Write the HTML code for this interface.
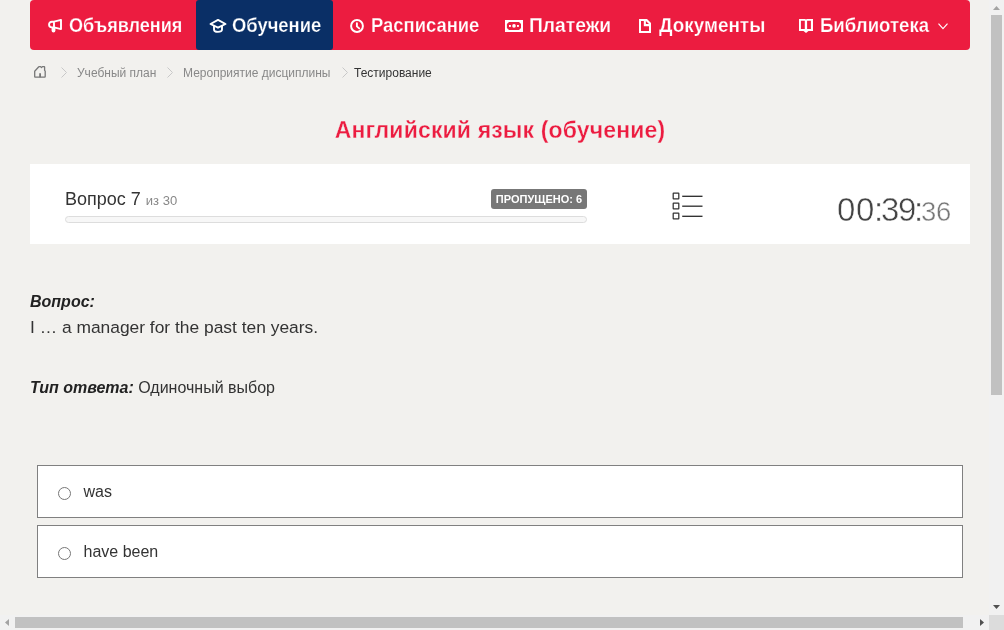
<!DOCTYPE html>
<html>
<head>
<meta charset="utf-8">
<style>
html,body{margin:0;padding:0;}
body{width:1004px;height:630px;overflow:hidden;position:relative;background:#f2f1ee;font-family:"Liberation Sans",sans-serif;color:#333;}
.a{position:absolute;white-space:nowrap;}
#nav{position:absolute;left:30px;top:0;width:940px;height:50px;background:#ec1c40;border-radius:4px;}
#act{position:absolute;left:196px;top:0;width:137px;height:49.6px;background:#0a2f66;border-radius:3px;}
.nt{position:absolute;top:13px;font-size:20.5px;transform-origin:0 0;font-weight:bold;color:#fff;white-space:nowrap;-webkit-text-stroke:0.25px #ec1c40;}
svg{position:absolute;overflow:visible;}
.bc{position:absolute;top:66px;font-size:12px;line-height:15px;color:#888;white-space:nowrap;}
#title{position:absolute;left:30px;width:940px;top:115px;letter-spacing:0.15px;text-align:center;font-size:23px;font-weight:bold;color:#ec1c40;line-height:30px;-webkit-text-stroke:0.3px #f2f1ee;}
#panel{position:absolute;left:30px;top:164px;width:940px;height:80px;background:#fff;}
#prog{position:absolute;left:65px;top:216px;width:520px;height:5px;border:1px solid #ddd;border-radius:4px;background:#f7f7f7;}
#badge{position:absolute;left:491px;top:189px;width:96px;height:20px;background:#777;border-radius:3px;color:#fff;font-size:11px;font-weight:bold;line-height:20px;text-align:center;}
.opt{position:absolute;left:37px;width:924px;height:51px;border:1px solid #808080;background:#fff;}
.radio{position:absolute;left:20px;top:21px;width:11px;height:11px;border:1px solid #767676;border-radius:50%;background:#fff;}
.ot{position:absolute;left:45.5px;top:0;line-height:51px;font-size:16px;color:#333;}
#vs{position:absolute;left:989px;top:0;width:15px;height:615px;background:#f1f1f1;}
#hs{position:absolute;left:0;top:615px;width:989px;height:15px;background:#f1f1f1;}
#corner{position:absolute;left:989px;top:615px;width:15px;height:15px;background:#dcdcdc;}
.tg{position:absolute;top:190px;font-size:33px;line-height:40px;color:#444;-webkit-text-stroke:0.5px #fff;}
.ts{position:absolute;top:195px;font-size:27.5px;line-height:34px;color:#777;-webkit-text-stroke:0.45px #fff;}
</style>
</head>
<body>
<div id="root" style="position:absolute;left:0;top:0;width:1004px;height:630px;will-change:transform">
<div id="nav"></div>
<div id="act"></div>
<!-- megaphone -->
<svg style="left:48px;top:19px" width="14" height="14" viewBox="0 0 14 14">
 <path d="M6 2.7 L3.9 2.7 A2.85 2.85 0 0 0 3.9 8.4 L6 8.4 Z M6 2.7 L13 0.9 L13 10.1 L6 8.4" fill="none" stroke="#fff" stroke-width="1.9" stroke-linejoin="round"/>
 <path d="M3.6 8 L3.6 11.6 A1.9 1.9 0 0 0 7.4 11.6 L7.4 8 Z" fill="#fff"/>
</svg>
<div class="nt" style="left:69px;transform:scaleX(0.881)">Объявления</div>
<!-- cap -->
<svg style="left:209px;top:19px" width="18" height="14" viewBox="0 0 18 14">
 <path d="M1.5 5 L9 0.95 L16.5 5 L9 8.7 Z" fill="none" stroke="#fff" stroke-width="1.9" stroke-linejoin="round"/>
 <path d="M5 6.5 L5 10.5 Q5 12.9 9 12.9 Q13 12.9 13 10.5 L13 6.5" fill="none" stroke="#fff" stroke-width="1.9"/>
</svg>
<div class="nt" style="left:232px;transform:scaleX(0.897);-webkit-text-stroke-color:#0a2f66">Обучение</div>
<!-- clock -->
<svg style="left:350px;top:19px" width="14" height="14" viewBox="0 0 14 14">
 <circle cx="7" cy="7" r="5.9" fill="none" stroke="#fff" stroke-width="2"/>
 <path d="M6.9 4.3 L6.9 7.4 L9.2 9.4" fill="none" stroke="#fff" stroke-width="1.9" stroke-linecap="round"/>
</svg>
<div class="nt" style="left:371px;transform:scaleX(0.898)">Расписание</div>
<!-- money -->
<svg style="left:505px;top:20px" width="18" height="12" viewBox="0 0 18 12">
 <rect x="0" y="0" width="18" height="12" fill="#fff"/>
 <path d="M1.9 4 L4 2 L14 2 L16 4 L16 8 L14 9.9 L4 9.9 L1.9 8 Z" fill="#ec1c40"/>
 <circle cx="9" cy="5.9" r="1.8" fill="#fff"/>
 <rect x="4" y="5" width="1.9" height="1.9" fill="#fff"/>
 <rect x="12" y="5" width="1.9" height="1.9" fill="#fff"/>
</svg>
<div class="nt" style="left:529px;transform:scaleX(0.94)">Платежи</div>
<!-- doc -->
<svg style="left:639px;top:19px" width="12" height="14" viewBox="0 0 12 14">
 <path fill="#fff" fill-rule="evenodd" d="M0 0 L8 0 L12 4 L12 14 L0 14 Z M2 2 L4.8 2 L4.8 7.2 L10 7.2 L10 12 L2 12 Z M6.9 2 L10 5.1 L6.9 5.1 Z"/>
</svg>
<div class="nt" style="left:659px;transform:scaleX(0.922)">Документы</div>
<!-- book -->
<svg style="left:799px;top:19px" width="14" height="14" viewBox="0 0 14 14">
 <path fill="#fff" fill-rule="evenodd" d="M0 0 L6 0 L7 0.6 L8 0 L14 0 L14 12 L9.5 12 L7 14 L4.5 12 L0 12 Z M1.9 1.8 L5.8 1.8 L5.8 10 L1.9 10 Z M8.1 1.8 L11.9 1.8 L11.9 10 L8.1 10 Z"/>
</svg>
<div class="nt" style="left:820px;transform:scaleX(0.907)">Библиотека</div>
<svg style="left:938px;top:23px" width="10" height="7" viewBox="0 0 10 7">
 <path d="M0.5 0.6 L5 5.6 L9.5 0.6" fill="none" stroke="#fff" stroke-width="1.15"/>
</svg>

<!-- breadcrumbs -->
<svg style="left:34px;top:66px" width="12" height="12" viewBox="0 0 12 12">
 <path d="M0.7 5.2 L4.8 0.8 Q5 0.6 5.4 0.6 L6.6 0.6 L7.5 1.6 L8.4 0.6 L10.2 0.6 Q10.6 0.6 10.6 1 L10.6 4.4 L11.2 5.1 L11.2 10.6 Q11.2 11.2 10.6 11.2 L1.3 11.2 Q0.7 11.2 0.7 10.6 Z" fill="none" stroke="#777" stroke-width="1.3" stroke-linejoin="round"/>
 <line x1="6.1" y1="7.2" x2="6.1" y2="11.2" stroke="#777" stroke-width="1.8"/>
</svg>
<svg style="left:61px;top:67px" width="6" height="11" viewBox="0 0 6 11"><path d="M0.5 0.5 L5.5 5.5 L0.5 10.5" fill="none" stroke="#c8c8c8" stroke-width="1"/></svg>
<div class="bc" style="left:77px">Учебный план</div>
<svg style="left:167px;top:67px" width="6" height="11" viewBox="0 0 6 11"><path d="M0.5 0.5 L5.5 5.5 L0.5 10.5" fill="none" stroke="#c8c8c8" stroke-width="1"/></svg>
<div class="bc" style="left:183px">Мероприятие дисциплины</div>
<svg style="left:342px;top:67px" width="6" height="11" viewBox="0 0 6 11"><path d="M0.5 0.5 L5.5 5.5 L0.5 10.5" fill="none" stroke="#c8c8c8" stroke-width="1"/></svg>
<div class="bc" style="left:354px;color:#333">Тестирование</div>

<div id="title">Английский язык (обучение)</div>

<div id="panel"></div>
<div class="a" style="left:65px;top:187px;font-size:18px;line-height:24px;color:#333">Вопрос 7 <span style="font-size:13px;color:#888">из 30</span></div>
<div id="prog"></div>
<div id="badge">ПРОПУЩЕНО: 6</div>
<svg style="left:672px;top:192px" width="32" height="29" viewBox="0 0 32 29">
 <rect x="1.2" y="1.2" width="5.6" height="5.6" fill="none" stroke="#333" stroke-width="1.25" rx="0.4"/>
 <rect x="1.2" y="11.2" width="5.6" height="5.6" fill="none" stroke="#333" stroke-width="1.25" rx="0.4"/>
 <rect x="1.2" y="21.2" width="5.6" height="5.6" fill="none" stroke="#333" stroke-width="1.25" rx="0.4"/>
 <line x1="10.2" y1="4.3" x2="30.5" y2="4.3" stroke="#333" stroke-width="1.35"/>
 <line x1="10.2" y1="14.2" x2="30.5" y2="14.2" stroke="#333" stroke-width="1.35"/>
 <line x1="10.2" y1="24.3" x2="30.5" y2="24.3" stroke="#333" stroke-width="1.35"/>
</svg>
<div id="timer">
<div class="tg" style="left:837px">0</div><div class="tg" style="left:856px">0</div><div class="tg" style="left:874px">:</div><div class="tg" style="left:881px">3</div><div class="tg" style="left:898px">9</div><div class="tg" style="left:914px">:</div>
<div class="ts" style="left:921px">3</div><div class="ts" style="left:936px">6</div>
</div>

<div class="a" style="left:30px;top:292px;font-size:16px;line-height:20px;font-weight:bold;font-style:italic;color:#222">Вопрос:</div>
<div class="a" style="left:30px;top:316px;font-size:17.4px;line-height:22px;color:#333">I … a manager for the past ten years.</div>
<div class="a" style="left:30px;top:378px;font-size:16px;line-height:20px;color:#333"><b style="color:#222"><i>Тип ответа:</i></b> Одиночный выбор</div>

<div class="opt" style="top:465px"><div class="radio"></div><div class="ot">was</div></div>
<div class="opt" style="top:525px"><div class="radio"></div><div class="ot">have been</div></div>

<div id="vs">
 <svg style="left:4px;top:6px" width="7" height="4" viewBox="0 0 7 4"><path d="M0 4 L3.5 0 L7 4 Z" fill="#a3a3a3"/></svg>
 <div style="position:absolute;left:2px;top:15px;width:11px;height:380px;background:#c1c1c1"></div>
 <svg style="left:4px;top:605px" width="7" height="4" viewBox="0 0 7 4"><path d="M0 0 L3.5 4 L7 0 Z" fill="#505050"/></svg>
</div>
<div id="hs">
 <svg style="left:5px;top:4px" width="4" height="7" viewBox="0 0 4 7"><path d="M4 0 L0 3.5 L4 7 Z" fill="#a3a3a3"/></svg>
 <div style="position:absolute;left:15px;top:2px;width:948px;height:11px;background:#c1c1c1"></div>
 <svg style="left:980px;top:4px" width="4" height="7" viewBox="0 0 4 7"><path d="M0 0 L4 3.5 L0 7 Z" fill="#505050"/></svg>
</div>
<div id="corner"></div>
</div>
</body>
</html>
